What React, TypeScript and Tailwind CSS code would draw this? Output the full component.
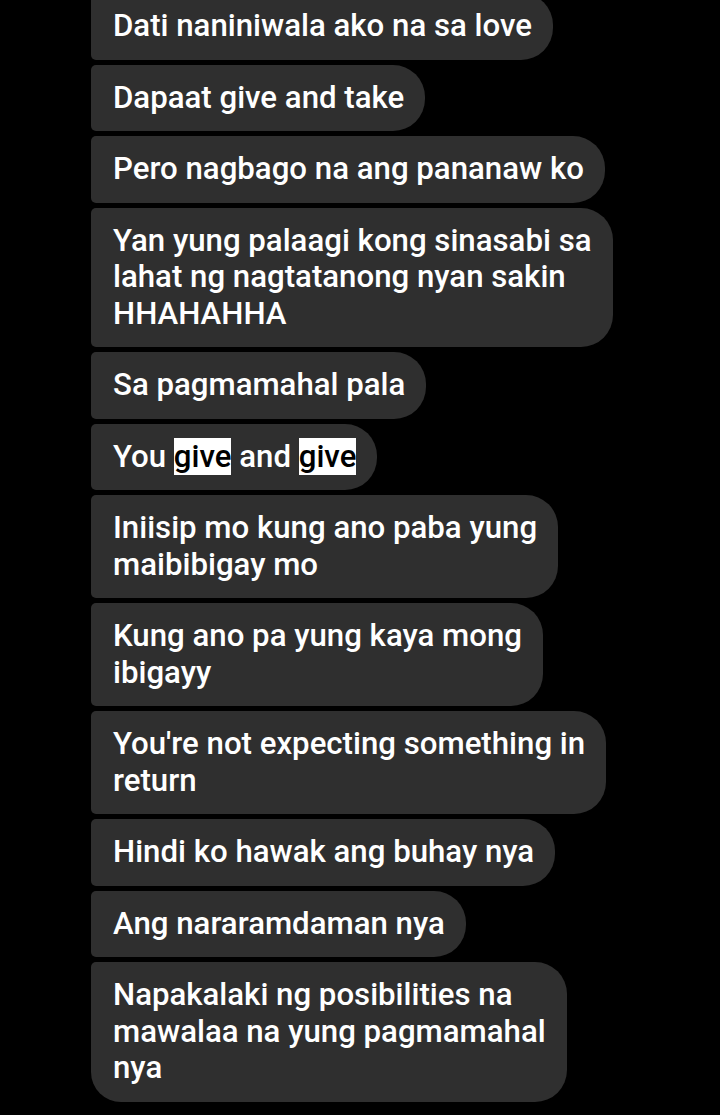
const messages: { lines: React.ReactNode }[] = [
  { lines: 'Dati naniniwala ako na sa love' },
  { lines: 'Dapaat give and take' },
  { lines: 'Pero nagbago na ang pananaw ko' },
  {
    lines: (
      <>
        Yan yung palaagi kong sinasabi sa
        <br />
        lahat ng nagtatanong nyan sakin
        <br />
        HHAHAHHA
      </>
    ),
  },
  { lines: 'Sa pagmamahal pala' },
  {
    lines: (
      <>
        You <mark className="bg-white text-black">give</mark> and{' '}
        <mark className="bg-white text-black">give</mark>
      </>
    ),
  },
  {
    lines: (
      <>
        Iniisip mo kung ano paba yung
        <br />
        maibibigay mo
      </>
    ),
  },
  {
    lines: (
      <>
        Kung ano pa yung kaya mong
        <br />
        ibigayy
      </>
    ),
  },
  {
    lines: (
      <>
        You're not expecting something in
        <br />
        return
      </>
    ),
  },
  { lines: 'Hindi ko hawak ang buhay nya' },
  { lines: 'Ang nararamdaman nya' },
  {
    lines: (
      <>
        Napakalaki ng posibilities na
        <br />
        mawalaa na yung pagmamahal
        <br />
        nya
      </>
    ),
  },
];

export default function App() {
  return (
    <div
      className="w-[720px] h-[1115px] overflow-hidden bg-black"
      style={{ fontFamily: 'Roboto, "Noto Sans", sans-serif' }}
    >
      <div className="mt-[-7px] flex flex-col items-start gap-[5px] pl-[91px]">
        {messages.map((m, i) => {
          const last = i === messages.length - 1;
          return (
            <div
              key={i}
              className={
                last
                  ? 'bg-[#2f2f2f] text-white font-medium text-[31.2px] leading-[36.5px] pl-[22px] pr-[21px] py-[15px] rounded-tl-[5px] rounded-bl-[30px] rounded-r-[32px]'
                  : 'bg-[#2f2f2f] text-white font-medium text-[31.2px] leading-[36.5px] pl-[22px] pr-[21px] py-[15px] rounded-l-[5px] rounded-r-[32px]'
              }
            >
              {m.lines}
            </div>
          );
        })}
      </div>
    </div>
  );
}
